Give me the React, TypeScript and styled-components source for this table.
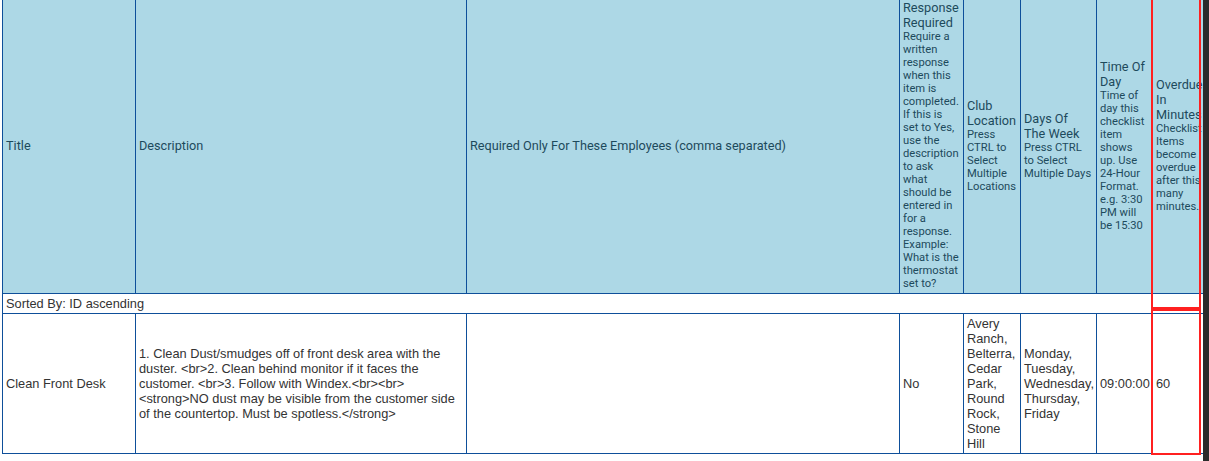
import React from "react";
import styled, { createGlobalStyle } from "styled-components";

const GlobalStyle = createGlobalStyle`
  html, body { margin: 0; padding: 0; background: #ffffff; }
  body { overflow: hidden; }
`;

const Frame = styled.div`
  display: flex;
  width: 1209px;
  height: 461px;
  overflow: hidden;
`;

const Viewport = styled.div`
  position: relative;
  flex: 0 0 1203px;
  overflow: hidden;
  padding-left: 2px;
  box-sizing: border-box;
`;

const ScrollStrip = styled.div`
  flex: 1 1 auto;
  background: #2b2b2b;
`;

const Table = styled.table`
  border-collapse: collapse;
  table-layout: fixed;
  width: 1210px;
  margin-top: -4px;
  font-family: "Liberation Sans", Arial, sans-serif;
  font-size: 12.8px;
  line-height: 15px;
  color: #333333;
`;

const HeadCell = styled.th<{ $padRight: number }>`
  background: #add8e6;
  border: 1px solid #0e4f9a;
  padding: 3px ${(p) => p.$padRight}px 3px 3px;
  text-align: left;
  vertical-align: middle;
  font-family: Roboto, "Liberation Sans", sans-serif;
  font-weight: 400;
  font-size: 12.7px;
  line-height: 15px;
  color: #1d4a5c;
  word-wrap: break-word;
`;

const Hint = styled.div`
  font-size: 11.2px;
  line-height: 13px;
`;

const SortCell = styled.td`
  border: 1px solid #0e4f9a;
  border-right: none;
  padding: 2px 3px;
  height: 15px;
  white-space: nowrap;
`;

const Cell = styled.td`
  border: 1px solid #0e4f9a;
  padding: 2px 3px;
  vertical-align: middle;
  text-align: left;
`;

const Mark = styled.div<{ $top: number; $height: number }>`
  position: absolute;
  box-sizing: border-box;
  left: 1151px;
  width: 50px;
  top: ${(p) => p.$top}px;
  height: ${(p) => p.$height}px;
  border: 2px solid #ff2020;
  pointer-events: none;
`;

type Column = { width: number; title: string; hint?: string; padRight?: number };

const columns: Column[] = [
  { width: 133, title: "Title" },
  { width: 331, title: "Description" },
  { width: 433, title: "Required Only For These Employees (comma separated)" },
  {
    width: 64,
    title: "Response Required",
    hint:
      "Require a written response when this item is completed. If this is set to Yes, use the description to ask what should be entered in for a response. Example: What is the thermostat set to?",
  },
  { width: 57, title: "Club Location", hint: "Press CTRL to Select Multiple Locations" },
  { width: 76, title: "Days Of The Week", hint: "Press CTRL to Select Multiple Days", padRight: 4 },
  {
    width: 56,
    title: "Time Of Day",
    hint: "Time of day this checklist item shows up. Use 24-Hour Format. e.g. 3:30 PM will be 15:30",
  },
  {
    width: 60,
    title: "Overdue In Minutes",
    hint: "Checklist Items become overdue after this many minutes.",
  },
];

const row = [
  "Clean Front Desk",
  "1. Clean Dust/smudges off of front desk area with the duster. <br>2. Clean behind monitor if it faces the customer. <br>3. Follow with Windex.<br><br><strong>NO dust may be visible from the customer side of the countertop. Must be spotless.</strong>",
  "",
  "No",
  "Avery Ranch, Belterra, Cedar Park, Round Rock, Stone Hill",
  "Monday, Tuesday, Wednesday, Thursday, Friday",
  "09:00:00",
  "60",
];

export default function App() {
  return (
    <>
      <GlobalStyle />
      <Frame>
        <Viewport>
          <Table>
            <colgroup>
              {columns.map((c) => (
                <col key={c.title} style={{ width: c.width }} />
              ))}
            </colgroup>
            <thead>
              <tr>
                {columns.map((c) => (
                  <HeadCell key={c.title} $padRight={c.padRight ?? 3}>
                    {c.title}
                    {c.hint && <Hint>{c.hint}</Hint>}
                  </HeadCell>
                ))}
              </tr>
            </thead>
            <tbody>
              <tr>
                <SortCell colSpan={columns.length}>Sorted By: ID ascending</SortCell>
              </tr>
              <tr>
                {row.map((v, i) => (
                  <Cell key={i}>{v}</Cell>
                ))}
              </tr>
            </tbody>
          </Table>
          <Mark $top={-2} $height={311} />
          <Mark $top={309} $height={146} />
        </Viewport>
        <ScrollStrip />
      </Frame>
    </>
  );
}
